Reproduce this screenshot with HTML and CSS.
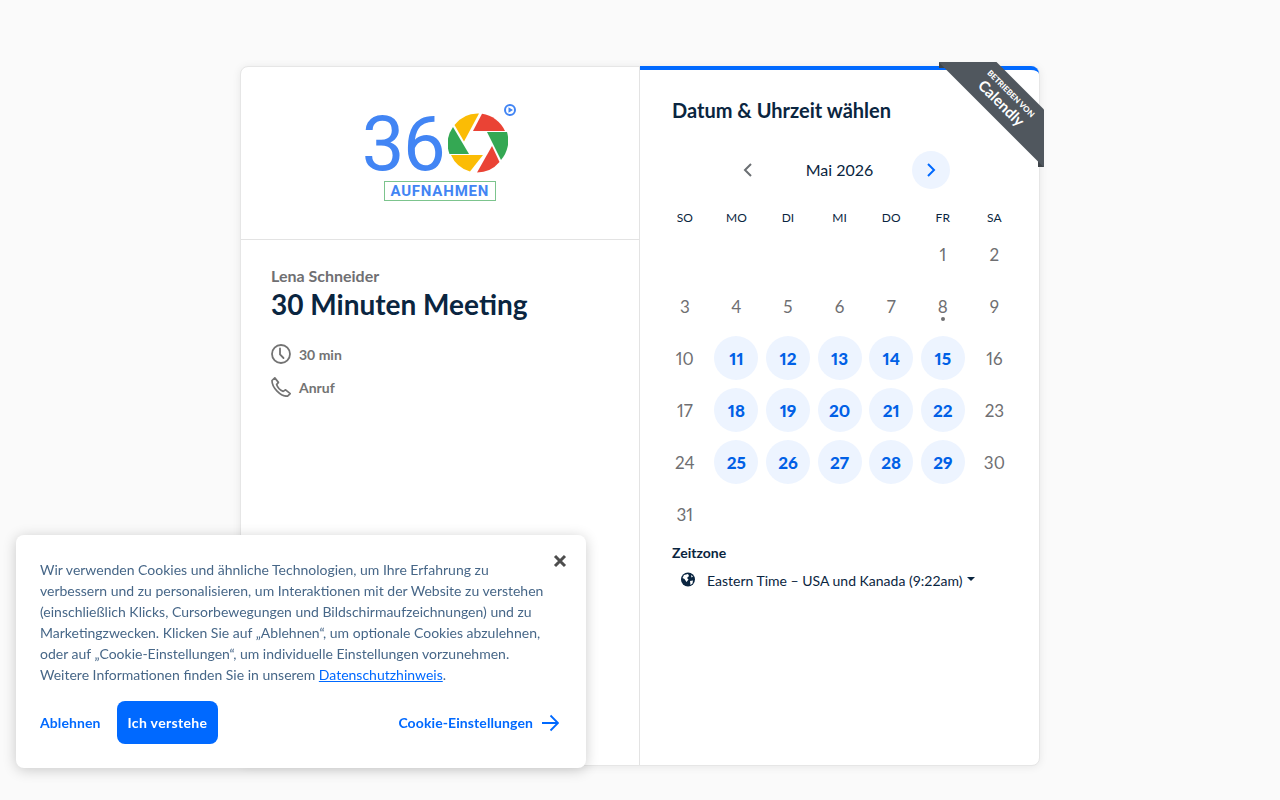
FILE: index.html
```html
<!DOCTYPE html>
<html lang="de">
    <head>
        <meta charset="UTF-8" />
        <title>30 Minuten Meeting</title>
        <link rel="stylesheet" href="styles.css">
    </head>
    <body>
        <div class="booking-card">
            <div class="details-pane">
                <div class="logo-box">
                    <div class="logo">
                        <div class="logo-top">
                            <span class="logo-digits">36</span>
                            <svg class="logo-shutter" width="60" height="60" viewBox="0 0 60 60">
                                <path fill="#fbbc05" d="M31 0.5 A29.5 29.5 0 0 0 6.5 12 L16 28.5 Z"/>
                                <path fill="#ea4335" d="M34 0.8 A29.5 29.5 0 0 1 57 18 L25 18 Z"/>
                                <path fill="#34a853" d="M39 19 L59 19 A29.5 29.5 0 0 1 53 47 Z"/>
                                <path fill="#ea4335" d="M44 33 L51.5 49 A29.5 29.5 0 0 1 29 59.5 Z"/>
                                <path fill="#fbbc05" d="M3 42 L35 42 L22 58.5 A29.5 29.5 0 0 1 3 42 Z"/>
                                <path fill="#34a853" d="M5 14 L21 41 L1.5 41 A29.5 29.5 0 0 1 5 14 Z"/>
                            </svg>
                            <svg class="logo-play" width="12" height="12" viewBox="0 0 12 12">
                                <circle cx="6" cy="6" r="5" fill="none" stroke="#4285f4" stroke-width="2"/>
                                <path fill="#4285f4" d="M4.5 3.2 L9 6 L4.5 8.8 Z"/>
                            </svg>
                        </div>
                        <div class="logo-label">AUFNAHMEN</div>
                    </div>
                </div>
                <div class="event-info">
                    <div class="host-name">Lena Schneider</div>
                    <h1 class="event-title">30 Minuten Meeting</h1>
                    <div class="event-row">
                        <svg width="20" height="20" viewBox="0 0 20 20" fill="none" stroke="#737373" stroke-width="1.8" stroke-linecap="round">
                            <circle cx="10" cy="10" r="9"/>
                            <path d="M9 4.5 V10.5 L12.5 14"/>
                        </svg>
                        <span>30 min</span>
                    </div>
                    <div class="event-row">
                        <svg width="20" height="20" viewBox="0 0 20 20" fill="none" stroke="#737373" stroke-width="1.7" stroke-linejoin="round">
                            <path d="M1 3.5 L3.8 0.9 L7.4 5.4 L5.6 7.6 C6.4 10 9.2 13.4 12.2 14.4 L14.6 12.8 L19.2 16.6 L16.6 19.2 C9.5 19.6 0.8 10.5 1 3.5 Z"/>
                        </svg>
                        <span>Anruf</span>
                    </div>
                </div>
            </div>
            <div class="calendar-pane">
                <h2 class="pane-title">Datum &amp; Uhrzeit wählen</h2>
                <div class="month-nav">
                    <span class="month-btn">
                        <svg width="10" height="14" viewBox="0 0 10 14" fill="none" stroke="#6b6f73" stroke-width="2"><path d="M8 1 L2 7 L8 13"/></svg>
                    </span>
                    <span class="month-name">Mai 2026</span>
                    <span class="month-btn next">
                        <svg width="10" height="14" viewBox="0 0 10 14" fill="none" stroke="#0069ff" stroke-width="2"><path d="M2 1 L8 7 L2 13"/></svg>
                    </span>
                </div>
                <div class="weekdays">
                    <span>SO</span><span>MO</span><span>DI</span><span>MI</span><span>DO</span><span>FR</span><span>SA</span>
                </div>
                <div class="days">
                    <span></span><span></span><span></span><span></span><span></span>
                    <span class="day">1</span><span class="day">2</span>
                    <span class="day">3</span><span class="day">4</span><span class="day">5</span><span class="day">6</span><span class="day">7</span><span class="day today">8</span><span class="day">9</span>
                    <span class="day">10</span><span class="day open">11</span><span class="day open">12</span><span class="day open">13</span><span class="day open">14</span><span class="day open">15</span><span class="day">16</span>
                    <span class="day">17</span><span class="day open">18</span><span class="day open">19</span><span class="day open">20</span><span class="day open">21</span><span class="day open">22</span><span class="day">23</span>
                    <span class="day">24</span><span class="day open">25</span><span class="day open">26</span><span class="day open">27</span><span class="day open">28</span><span class="day open">29</span><span class="day">30</span>
                    <span class="day">31</span>
                </div>
                <div class="timezone">
                    <div class="timezone-label">Zeitzone</div>
                    <div class="timezone-value">
                        <svg width="16" height="16" viewBox="0 0 16 16">
                            <circle cx="8" cy="7.5" r="7" fill="#0a2540"/>
                            <path fill="#fff" d="M4 3 L8 2 L9 4 L7 6 L8.5 7.5 L6.5 10 L4.5 7 L2.5 6 Z M10 9 L13 8.5 L12.5 11.5 L10.5 13 Z M11 3 L13 4.5 L11.5 5.5 Z"/>
                        </svg>
                        <span>Eastern Time – USA und Kanada (9:22am)</span>
                        <i class="caret"></i>
                    </div>
                </div>
            </div>
            <div class="ribbon">
                <div class="ribbon-band">
                    <span class="ribbon-small">BETRIEBEN VON</span>
                    <span class="ribbon-big">Calendly</span>
                </div>
            </div>
        </div>

        <div class="cookie-box">
            <button class="cookie-close" aria-label="Schließen">
                <svg width="14" height="14" viewBox="0 0 14 14" stroke="#4d4d4d" stroke-width="3"><path d="M2 2 L12 12 M12 2 L2 12"/></svg>
            </button>
            <p class="cookie-text">Wir verwenden Cookies und ähnliche Technologien, um Ihre Erfahrung zu<br>verbessern und zu personalisieren, um Interaktionen mit der Website zu verstehen<br>(einschließlich Klicks, Cursorbewegungen und Bildschirmaufzeichnungen) und zu<br>Marketingzwecken. Klicken Sie auf „Ablehnen“, um optionale Cookies abzulehnen,<br>oder auf „Cookie-Einstellungen“, um individuelle Einstellungen vorzunehmen.<br>Weitere Informationen finden Sie in unserem <a href="#">Datenschutzhinweis</a>.</p>
            <div class="cookie-actions">
                <a href="#" class="cookie-link">Ablehnen</a>
                <button class="cookie-accept">Ich verstehe</button>
                <a href="#" class="cookie-link cookie-settings">Cookie-Einstellungen
                    <svg width="18" height="18" viewBox="0 0 18 18" fill="none" stroke="#0069ff" stroke-width="1.8"><path d="M1 9 H17 M9.5 1.5 L17 9 L9.5 16.5"/></svg>
                </a>
            </div>
        </div>
    </body>
</html>
```

FILE: styles.css
```css
* {
    margin: 0;
    padding: 0;
    box-sizing: border-box;
}

body {
    font-family: "Lato", "Open Sans", sans-serif;
    background-color: #fafafa;
    color: #0a2540;
    height: 800px;
    overflow: hidden;
    padding-top: 66px;
}

.booking-card {
    position: relative;
    display: flex;
    width: 800px;
    height: 700px;
    margin: 0 auto;
    background-color: white;
    border-radius: 8px;
    border: 1px solid #e6e6e6;
    box-shadow: 0 1px 8px rgba(0, 0, 0, 0.08);
}

.details-pane {
    flex: none;
    width: 399px;
    border-right: 1px solid #e3e3e3;
}

.logo-box {
    display: flex;
    justify-content: center;
    height: 173px;
    padding-top: 37px;
    border-bottom: 1px solid #e3e3e3;
}

.logo-top {
    display: flex;
    align-items: flex-start;
    height: 77px;
    margin-left: 2px;
}

.logo-digits {
    margin-top: 2px;
    font-family: "Roboto", sans-serif;
    font-size: 76px;
    font-weight: 450;
    line-height: 76px;
    color: #4285f4;
    letter-spacing: -1.5px;
}

.logo-shutter {
    margin-top: 9px;
    margin-left: 4px;
}

.logo-play {
    margin-left: -4px;
    margin-right: 4px;
}

.logo-label {
    width: 112px;
    height: 20px;
    margin: 0 0 0 24px;
    border: 1px solid #7cc48d;
    color: #4285f4;
    font-family: "Roboto", sans-serif;
    font-size: 15px;
    font-weight: 700;
    letter-spacing: 0.8px;
    line-height: 19px;
    text-align: center;
}

.event-info {
    padding: 26px 30px;
}

.host-name {
    color: #6f6f72;
    font-size: 16px;
    font-weight: 700;
    line-height: 20px;
}

.event-title {
    font-size: 28px;
    font-weight: 700;
    line-height: 36px;
    margin-bottom: 22px;
}

.event-row {
    display: flex;
    align-items: center;
    gap: 8px;
    height: 20px;
    margin-bottom: 13px;
    color: #737373;
    font-size: 14px;
    font-weight: 700;
}

.calendar-pane {
    flex: 1;
    min-width: 0;
    padding: 0 32px;
    border-top: 4px solid #0069ff;
    border-top-right-radius: 8px;
    margin-top: -1px;
}

.pane-title {
    font-size: 20px;
    font-weight: 700;
    line-height: 28px;
    margin-top: 26px;
}

.month-nav {
    display: flex;
    justify-content: center;
    align-items: center;
    gap: 38px;
    height: 38px;
    margin-top: 27px;
}

.month-btn {
    display: flex;
    align-items: center;
    justify-content: center;
    width: 38px;
    height: 38px;
    border-radius: 50%;
}

.month-btn.next {
    background-color: #edf4ff;
}

.month-name {
    width: 69px;
    padding-bottom: 2px;
    font-size: 16px;
    white-space: nowrap;
    text-align: center;
}

.weekdays {
    display: grid;
    grid-template-columns: repeat(7, 51.6px);
    margin: 22px 0 0 -13px;
    font-size: 12px;
    line-height: 14px;
    text-align: center;
}

.days {
    display: grid;
    grid-template-columns: repeat(7, 51.6px);
    grid-auto-rows: 52px;
    margin: 3px 0 0 -13px;
    height: 312px;
    font-variant-numeric: proportional-nums;
}

.day {
    position: relative;
    display: flex;
    align-items: center;
    justify-content: center;
    width: 44px;
    height: 44px;
    margin: 4px auto;
    border-radius: 50%;
    color: #6f6f72;
    font-size: 17px;
}

.day.open {
    background-color: #edf4ff;
    color: #0060e6;
    font-weight: 900;
}

.day.today::after {
    content: "";
    position: absolute;
    left: 20px;
    bottom: 7px;
    width: 4px;
    height: 4px;
    border-radius: 50%;
    background-color: #6f6f72;
}

.timezone {
    margin-top: 4px;
}

.timezone-label {
    font-size: 14px;
    font-weight: 700;
    line-height: 18px;
}

.timezone-value {
    display: flex;
    align-items: center;
    height: 20px;
    margin-top: 8px;
    padding-left: 8px;
    font-size: 14px;
}

.timezone-value span {
    margin-left: 11px;
}

.caret {
    margin: 0 0 2px 4px;
    border-left: 4px solid transparent;
    border-right: 4px solid transparent;
    border-top: 4px solid #0a2540;
}

.ribbon {
    position: absolute;
    top: -5px;
    right: -5px;
    width: 105px;
    height: 105px;
    overflow: hidden;
}

/* folded ends of the ribbon */
.ribbon::before,
.ribbon::after {
    content: "";
    position: absolute;
    width: 6px;
    height: 6px;
    background-color: #3e4449;
}

.ribbon::before {
    top: 0;
    left: 0;
}

.ribbon::after {
    right: 0;
    bottom: 0;
}

.ribbon-band {
    position: absolute;
    z-index: 1;
    top: 17px;
    left: -19px;
    width: 170px;
    height: 41px;
    display: flex;
    flex-direction: column;
    align-items: center;
    justify-content: center;
    background-color: #50575e;
    color: white;
    transform: rotate(45deg);
}

.ribbon-small {
    font-size: 8px;
    font-weight: 900;
    line-height: 10px;
}

.ribbon-big {
    font-size: 15px;
    font-weight: 700;
    line-height: 17px;
}

.cookie-box {
    position: fixed;
    left: 16px;
    top: 535px;
    width: 570px;
    height: 233px;
    padding: 24px;
    background-color: white;
    border-radius: 8px;
    box-shadow: 0 2px 14px rgba(0, 0, 0, 0.2);
}

.cookie-close {
    position: absolute;
    top: 19px;
    right: 19px;
    border: 0;
    background: none;
    width: 14px;
    height: 14px;
}

.cookie-text {
    color: #476788;
    font-size: 14px;
    line-height: 21px;
}

.cookie-text a {
    color: #0069ff;
}

.cookie-actions {
    display: flex;
    align-items: center;
    margin-top: 16px;
}

.cookie-link {
    color: #0069ff;
    font-size: 14px;
    font-weight: 700;
    letter-spacing: 0.1px;
    text-decoration: none;
}

.cookie-accept {
    height: 43px;
    margin-left: 16px;
    padding: 0 11px;
    border: 0;
    border-radius: 8px;
    background-color: #0069ff;
    color: white;
    font-family: inherit;
    font-size: 14px;
    font-weight: 700;
    letter-spacing: 0.35px;
}

.cookie-settings {
    display: flex;
    align-items: center;
    gap: 8px;
    margin-left: auto;
    margin-right: 3px;
}
```
